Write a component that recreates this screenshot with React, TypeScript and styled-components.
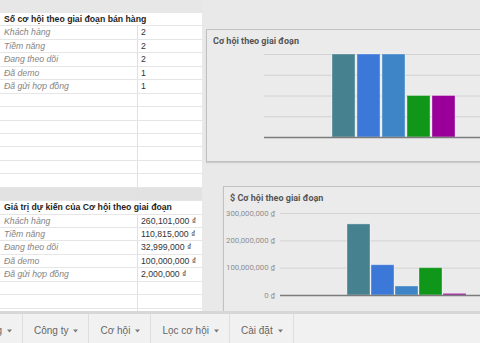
import React from 'react'
import styled, { createGlobalStyle } from 'styled-components'

const GlobalStyle = createGlobalStyle`
  html, body { margin: 0; padding: 0; }
  body { font-family: "Liberation Sans", Arial, sans-serif; background: #e9e9e9; }
`

interface StageRow {
  label: string
  count: number
  value: number
  color: string
}

const stages: StageRow[] = [
  { label: 'Khách hàng', count: 2, value: 260101000, color: '#45818e' },
  { label: 'Tiềm năng', count: 2, value: 110815000, color: '#3c78d8' },
  { label: 'Đang theo dõi', count: 2, value: 32999000, color: '#3d85c6' },
  { label: 'Đã demo', count: 1, value: 100000000, color: '#109618' },
  { label: 'Đã gửi hợp đồng', count: 1, value: 2000000, color: '#990099' },
]

const tabs = ['Công ty', 'Cơ hội', 'Lọc cơ hội', 'Cài đặt']

const money = (n: number) => n.toLocaleString('en-US') + ' ₫'

const Caret = () => (
  <svg width="5" height="4" viewBox="0 0 5 4">
    <path d="M0 0.6h5L2.5 3.4z" fill="#7a7a7a" />
  </svg>
)

const CountChart = () => {
  const base = 86
  const top = 3
  const unit = (base - top) / 2
  return (
    <svg width="280" height="110">
      {[0, 1, 2, 3].map((i) => (
        <line key={i} x1="57" x2="280" y1={top + i * (unit / 2) + 0.5} y2={top + i * (unit / 2) + 0.5} stroke="#d2d2d2" />
      ))}
      {stages.map((s, i) => (
        <rect
          key={s.label}
          x={125 + i * 25}
          y={base - s.count * unit}
          width="23"
          height={s.count * unit}
          fill={s.color}
          stroke="rgba(255,255,255,0.35)"
        />
      ))}
      <line x1="57" x2="280" y1={base + 0.5} y2={base + 0.5} stroke="#7b7b7b" strokeWidth="1.3" />
    </svg>
  )
}

const ValueChart = () => {
  const base = 87
  const top = 5
  const max = 300000000
  const scale = (base - top) / max
  const ticks = [300000000, 200000000, 100000000, 0]
  return (
    <svg width="270" height="110">
      {ticks.map((t) => {
        const y = base - t * scale
        return (
          <g key={t}>
            {t > 0 && <line x1="56" x2="270" y1={y + 0.5} y2={y + 0.5} stroke="#d4d4d4" />}
            <AxisText x="51" y={y + 2.8} textAnchor="end">
              {money(t)}
            </AxisText>
          </g>
        )
      })}
      {stages.map((s, i) => {
        const h = Math.max(s.value * scale, 1.6)
        return (
          <rect
            key={s.label}
            x={123 + i * 24}
            y={base - h}
            width="23"
            height={h}
            fill={s.color}
            stroke="rgba(255,255,255,0.35)"
          />
        )
      })}
      <line x1="56" x2="270" y1={base + 0.5} y2={base + 0.5} stroke="#7b7b7b" strokeWidth="1.3" />
    </svg>
  )
}

const App: React.FC = () => {
  return (
    <Page>
      <GlobalStyle />
      <Main>
        <Sheet>
          <TopBand />
          <Row>
            <Head>Số cơ hội theo giai đoạn bán hàng</Head>
          </Row>
          {stages.map((s) => (
            <Row key={s.label}>
              <Label>{s.label}</Label>
              <Value>{s.count}</Value>
            </Row>
          ))}
          {Array.from({ length: 7 }).map((_, i) => (
            <Row key={'e' + i}>
              <Label />
              <Value />
            </Row>
          ))}
          <Row $band>
            <Label />
            <Value />
          </Row>
          <Row>
            <Head>Giá trị dự kiến của Cơ hội theo giai đoạn</Head>
          </Row>
          {stages.map((s) => (
            <Row key={'v' + s.label}>
              <Label>{s.label}</Label>
              <Value>{money(s.value)}</Value>
            </Row>
          ))}
          {Array.from({ length: 3 }).map((_, i) => (
            <Row key={'f' + i}>
              <Label />
              <Value />
            </Row>
          ))}
        </Sheet>

        <Canvas>
          <Panel $indent={4} $top={29} $height={133}>
            <ChartTitle>Cơ hội theo giai đoạn</ChartTitle>
            <CountChart />
          </Panel>
          <Panel $indent={21} $top={24} $height={160}>
            <ChartTitle>$ Cơ hội theo giai đoạn</ChartTitle>
            <ValueChart />
          </Panel>
        </Canvas>
      </Main>

      <TabBar>
        <ClippedTab>
          <Tab>
            Khách hàng <Caret />
          </Tab>
        </ClippedTab>
        {tabs.map((t) => (
          <Tab key={t}>
            {t} <Caret />
          </Tab>
        ))}
      </TabBar>
    </Page>
  )
}

export default App

const Page = styled.div`
  width: 480px;
  height: 343px;
  display: flex;
  flex-direction: column;
  overflow: hidden;
  background: #e9e9e9;
`

const Main = styled.div`
  height: 311px;
  flex: none;
  display: flex;
  overflow: hidden;
`

const Sheet = styled.div`
  width: 202px;
  flex: none;
  display: flex;
  flex-direction: column;
  background: #fff;
  overflow: hidden;
`

const TopBand = styled.div`
  height: 13px;
  flex: none;
  background: #e7e7e7;
`

const Row = styled.div<{ $band?: boolean }>`
  display: grid;
  grid-template-columns: 138px 1fr;
  height: 13.45px;
  flex: none;
  box-sizing: border-box;
  border-bottom: 1px solid #e6e6e6;
  background: ${({ $band }) => ($band ? '#e2e2e2' : '#fff')};
  font-size: 8.7px;
  line-height: 12.45px;
`

const Head = styled.div`
  grid-column: 1 / -1;
  padding-left: 4px;
  font-weight: 700;
  color: #1e1e1e;
  white-space: nowrap;
`

const Label = styled.div`
  padding-left: 4px;
  font-style: italic;
  color: #858585;
  border-right: 1px solid #e0e0e0;
  white-space: nowrap;
`

const Value = styled.div`
  padding-left: 3px;
  color: #333;
  white-space: nowrap;
`

const Canvas = styled.div`
  flex: 1;
  display: flex;
  flex-direction: column;
  overflow: hidden;
`

const Panel = styled.div<{ $indent: number; $top: number; $height: number }>`
  flex: none;
  width: 300px;
  height: ${({ $height }) => $height}px;
  margin-left: ${({ $indent }) => $indent}px;
  margin-top: ${({ $top }) => $top}px;
  box-sizing: border-box;
  border: 1px solid #c2c2c2;
  box-shadow: 0 1px 1px rgba(0, 0, 0, 0.12);
  background: #ebebeb;
  display: flex;
  flex-direction: column;
`

const ChartTitle = styled.div`
  height: 21px;
  line-height: 22px;
  padding-left: 6px;
  font-family: Roboto, "Liberation Sans", sans-serif;
  font-weight: 700;
  font-size: 9px;
  color: #555;
  white-space: nowrap;
`

const AxisText = styled.text`
  font-family: Roboto, "Liberation Sans", sans-serif;
  font-size: 7.8px;
  fill: #8f8f8f;
`

const TabBar = styled.div`
  flex: 1;
  display: flex;
  border-top: 3px solid #d7d7d7;
  background: #f1f1f1;
`

const ClippedTab = styled.div`
  width: 23px;
  flex: none;
  display: flex;
  justify-content: flex-end;
  overflow: hidden;
`

const Tab = styled.div`
  flex: none;
  display: flex;
  align-items: center;
  gap: 5px;
  padding: 4px 10px 0 11px;
  border-right: 1px solid #dedede;
  font-size: 10px;
  color: #666;
  white-space: nowrap;
`
